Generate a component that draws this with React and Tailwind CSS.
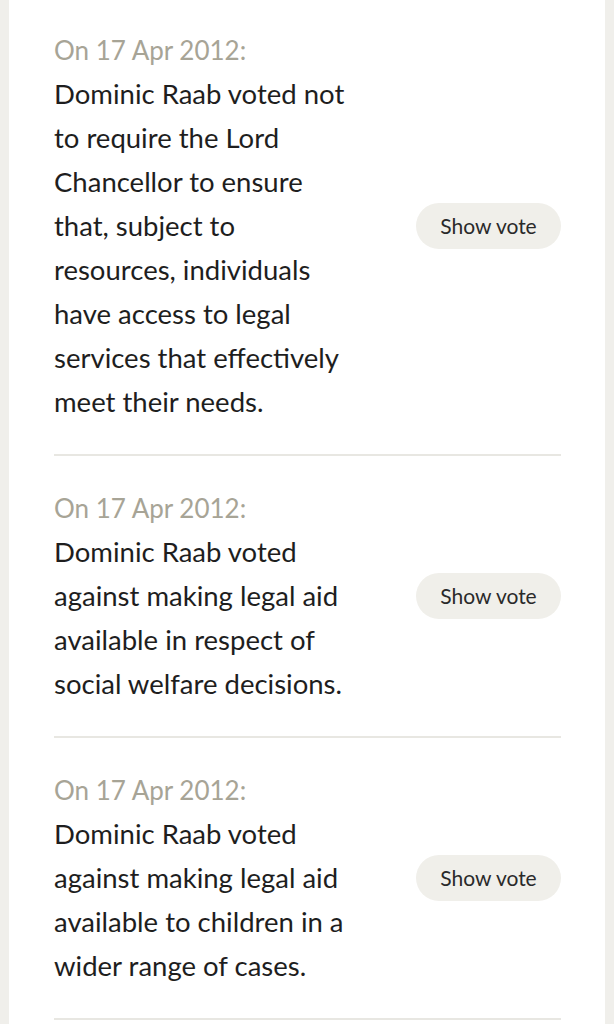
import React from 'react';

const votes = [
  {
    id: 1,
    date: 'On 17 Apr 2012:',
    lines: [
      'Dominic Raab voted not',
      'to require the Lord',
      'Chancellor to ensure',
      'that, subject to',
      'resources, individuals',
      'have access to legal',
      'services that effectively',
      'meet their needs.',
    ],
  },
  {
    id: 2,
    date: 'On 17 Apr 2012:',
    lines: [
      'Dominic Raab voted',
      'against making legal aid',
      'available in respect of',
      'social welfare decisions.',
    ],
  },
  {
    id: 3,
    date: 'On 17 Apr 2012:',
    lines: [
      'Dominic Raab voted',
      'against making legal aid',
      'available to children in a',
      'wider range of cases.',
    ],
  },
];

const VoteRow = ({ vote, first }) => (
  <div
    className={`flex items-center justify-between border-b-2 border-[#e8e7e2] pb-[30px] ${
      first ? 'pt-[28px]' : 'pt-[30px]'
    }`}
  >
    <div className="w-[320px] text-[27.5px] leading-[44px]">
      <div className="text-[#a7a496] text-[26px]">{vote.date}</div>
      {vote.lines.map((line, idx) => (
        <div key={idx} className="text-[#1e1e1e] whitespace-nowrap">
          {line}
        </div>
      ))}
    </div>
    <button className="w-[145px] h-[46px] rounded-full bg-[#f0efea] text-[21px] text-[#2a2a2a]">
      Show vote
    </button>
  </div>
);

const App = () => {
  return (
    <div
      className="min-h-screen bg-[#f0efeb] px-[9px]"
      style={{ fontFamily: '"Lato", "Open Sans", sans-serif' }}
    >
      <div className="min-h-screen bg-white pl-[45px] pr-[44px]">
        {votes.map((v, i) => (
          <VoteRow key={v.id} vote={v} first={i === 0} />
        ))}
      </div>
    </div>
  );
};

export default App;
